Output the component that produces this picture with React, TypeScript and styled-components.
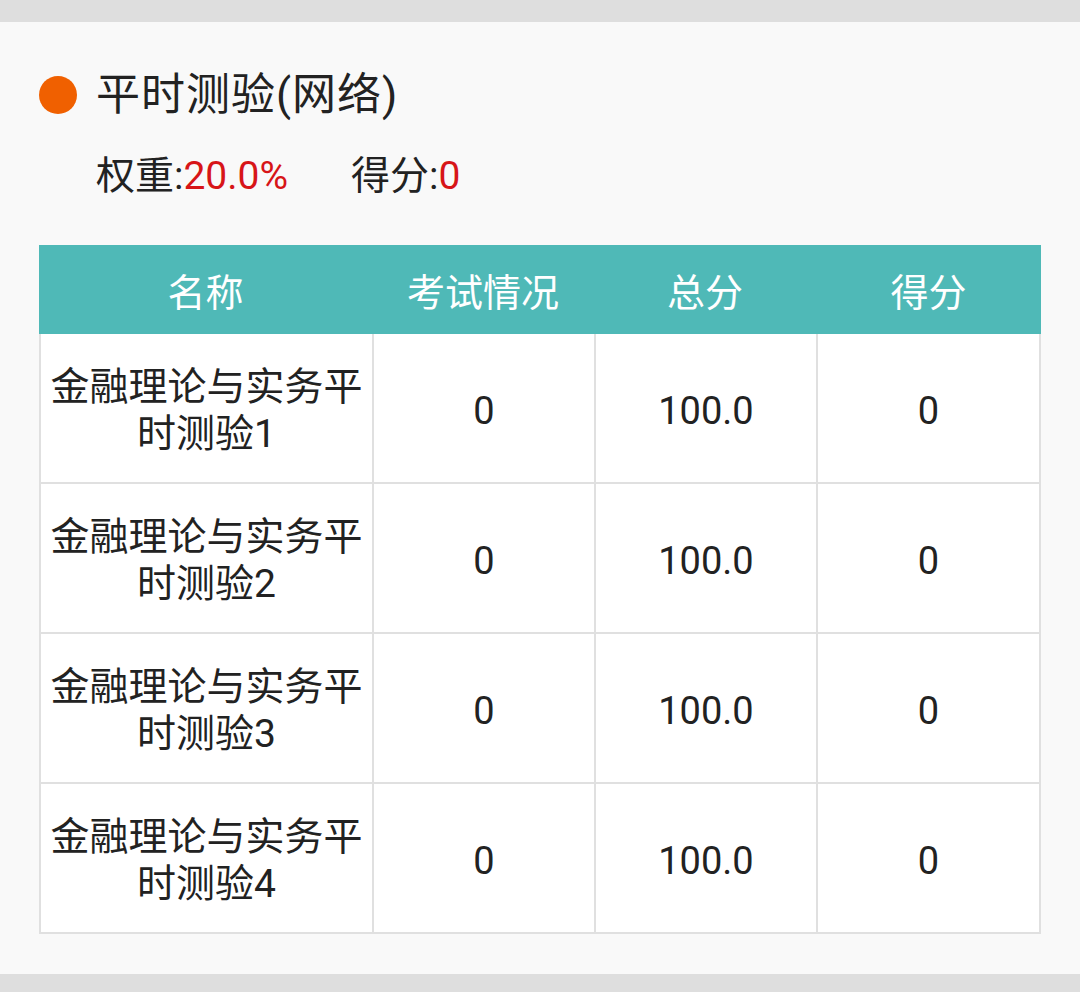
import React from "react";
import styled, { createGlobalStyle } from "styled-components";

const GlobalStyle = createGlobalStyle`
  html, body {
    margin: 0;
    padding: 0;
    background: #dedede;
  }
  body {
    font-family: Roboto, "Noto Sans CJK SC", sans-serif;
    color: #222222;
  }
`;

const Page = styled.div`
  padding: 22px 0 18px;
  width: 1080px;
`;

const Card = styled.section`
  background: #f9f9f9;
  height: 952px;
  box-sizing: border-box;
  padding-top: 47px;
`;

const TitleRow = styled.div`
  display: flex;
  align-items: center;
  padding-left: 39px;
  gap: 19px;
`;

const Dot = styled.span`
  width: 38px;
  height: 38px;
  border-radius: 50%;
  background: #f06000;
  flex: none;
`;

const Title = styled.h2`
  margin: 0;
  font-size: 44px;
  line-height: 52px;
  font-weight: 400;
  letter-spacing: 1px;
  color: #222222;
`;

const InfoRow = styled.div`
  display: flex;
  padding-left: 96px;
  margin-top: 32px;
  font-size: 39px;
  line-height: 46px;
  gap: 63px;
`;

const InfoItem = styled.span`
  color: #222222;
`;

const Value = styled.span`
  color: #d71518;
`;

const Table = styled.div`
  width: 1002px;
  margin: 46px 0 0 39px;
`;

const HeaderRow = styled.div`
  display: grid;
  grid-template-columns: 333px 222px 222px 1fr;
  height: 89px;
  background: #4fb9b7;
`;

const HeaderCell = styled.div`
  display: flex;
  align-items: center;
  justify-content: center;
  color: #ffffff;
  font-size: 38px;
`;

const BodyRow = styled.div`
  display: grid;
  grid-template-columns: 331px 222px 222px 1fr;
  border-left: 2px solid #e0e0e0;
  border-right: 2px solid #e0e0e0;
  border-bottom: 2px solid #e0e0e0;
  height: 150px;
  box-sizing: border-box;
  background: #ffffff;
`;

const Cell = styled.div<{ $first?: boolean }>`
  display: flex;
  align-items: center;
  justify-content: center;
  text-align: center;
  box-sizing: border-box;
  border-left: ${(p) => (p.$first ? "none" : "2px solid #e0e0e0")};
  font-size: ${(p) => (p.$first ? "39px" : "38px")};
  line-height: 47px;
  color: #222222;
  padding: 6px 4px 0;
`;

const rows = [1, 2, 3, 4].map((n) => ({
  name: `金融理论与实务平时测验${n}`,
  status: "0",
  total: "100.0",
  score: "0",
}));

export default function App() {
  return (
    <>
      <GlobalStyle />
      <Page>
        <Card>
          <TitleRow>
            <Dot />
            <Title>平时测验(网络)</Title>
          </TitleRow>
          <InfoRow>
            <InfoItem>
              权重:<Value>20.0%</Value>
            </InfoItem>
            <InfoItem>
              得分:<Value>0</Value>
            </InfoItem>
          </InfoRow>
          <Table>
            <HeaderRow>
              <HeaderCell>名称</HeaderCell>
              <HeaderCell>考试情况</HeaderCell>
              <HeaderCell>总分</HeaderCell>
              <HeaderCell>得分</HeaderCell>
            </HeaderRow>
            {rows.map((r) => (
              <BodyRow key={r.name}>
                <Cell $first>{r.name}</Cell>
                <Cell>{r.status}</Cell>
                <Cell>{r.total}</Cell>
                <Cell>{r.score}</Cell>
              </BodyRow>
            ))}
          </Table>
        </Card>
      </Page>
    </>
  );
}
